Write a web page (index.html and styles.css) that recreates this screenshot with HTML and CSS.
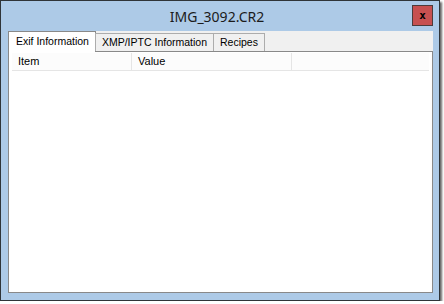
FILE: index.html
```html
<!DOCTYPE html>
<html lang="en">
<head>
    <meta charset="UTF-8">
    <title>IMG_3092.CR2</title>
    <link rel="stylesheet" href="styles.css">
</head>
<body>
    <div class="window">
        <div class="titlebar">
            <span></span>
            <span class="title">IMG_3092.CR2</span>
            <button class="close-button">x</button>
        </div>
        <div class="client">
            <div class="tabs">
                <div class="tab active">Exif Information</div>
                <div class="tab">XMP/IPTC Information</div>
                <div class="tab">Recipes</div>
            </div>
            <div class="panel">
                <div class="list-header">
                    <div class="col col-item">Item</div>
                    <div class="col col-value">Value</div>
                    <div class="col col-rest"></div>
                </div>
            </div>
        </div>
    </div>
</body>
</html>
```

FILE: styles.css
```css
body {
    margin: 0;
    background: #ffffff;
    font-family: "Liberation Sans", Arial, sans-serif;
}
.window {
    box-sizing: border-box;
    width: 440px;
    height: 301px;
    background: #adcae7;
    border: 1px solid #2f3438;
    box-shadow: 2px 2px 2px rgba(0, 0, 0, 0.6);
    display: flex;
    flex-direction: column;
}
.titlebar {
    height: 30px;
    box-sizing: border-box;
    padding: 4px 6px 0 0;
    display: grid;
    grid-template-columns: 1fr auto 1fr;
    align-items: start;
}
.title {
    font-family: "Noto Sans", sans-serif;
    font-size: 14px;
    color: #1b1b1b;
    line-height: 20px;
    padding-top: 2px;
}
.close-button {
    justify-self: end;
    width: 21px;
    height: 21px;
    box-sizing: border-box;
    background: #c75050;
    border: 1px solid #4d3b3b;
    padding: 0;
    font-family: "DejaVu Sans Mono", monospace;
    font-weight: bold;
    font-size: 11px;
    line-height: 16px;
    color: #000000;
}
.client {
    flex: 1;
    margin: 0 6px 7px 7px;
    background: #f0f0f0;
    display: flex;
    flex-direction: column;
}
.tabs {
    display: flex;
    height: 20px;
    align-items: flex-end;
    position: relative;
    z-index: 1;
}
.tab {
    box-sizing: border-box;
    height: 18px;
    padding: 0 6px;
    font-size: 10.5px;
    line-height: 17px;
    color: #000000;
    background: #f0f0f0;
    border: 1px solid #acacac;
    border-bottom: none;
    margin-left: -1px;
}
.tab.active {
    height: 21px;
    margin-bottom: -1px;
    margin-left: 0;
    padding: 0 6px 0 7px;
    background: #ffffff;
    border-color: #898989;
    line-height: 19px;
}
.panel {
    flex: 1;
    background: #ffffff;
    border: 1px solid #898989;
    padding: 1px 3px 3px 3px;
}
.list-header {
    display: flex;
    height: 17px;
    background: #fcfcfc;
    border-bottom: 1px solid #e5e5e5;
}
.col {
    box-sizing: border-box;
    font-size: 11px;
    line-height: 16px;
    padding-left: 6px;
    color: #000000;
    border-right: 1px solid #e5e5e5;
}
.col-item {
    width: 120px;
}
.col-value {
    width: 160px;
}
.col-rest {
    flex: 1;
    border-right: none;
}
```
